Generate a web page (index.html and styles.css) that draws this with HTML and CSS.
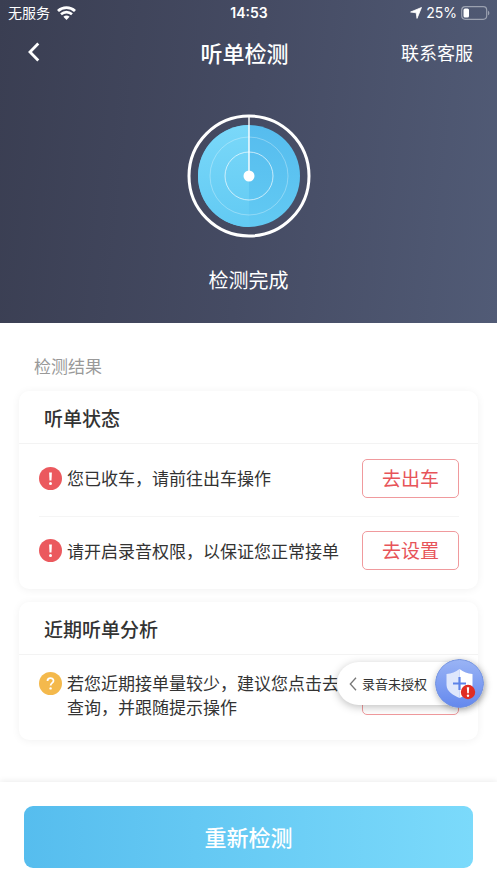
FILE: index.html
```html
<!DOCTYPE html>
<html lang="zh-CN">
<head>
<meta charset="utf-8">
<meta name="viewport" content="width=device-width, initial-scale=1">
<title>听单检测</title>
<link rel="stylesheet" href="styles.css">
</head>
<body>
<header class="hero">
  <div class="status">
    <div class="status-side">
      <span>无服务</span>
      <svg width="19" height="14" viewBox="0 0 19 14" fill="none" stroke="#fff" aria-hidden="true">
        <path d="M1 4.900C5.800.4 13.200.4 18 4.900" stroke-width="2.800"/>
        <path d="M4 8.300C7.200 5.400 11.800 5.400 15 8.300" stroke-width="2.600"/>
        <path d="M6.400 10.800C8.200 9.100 10.800 9.100 12.600 10.800L9.500 14Z" fill="#fff" stroke="none"/>
      </svg>
    </div>
    <time class="clock">14:53</time>
    <div class="status-side status-right">
      <svg width="12" height="12" viewBox="0 0 12 12" fill="#fff" stroke="#fff" stroke-width=".8" stroke-linejoin="round" aria-hidden="true"><path d="M11.500.5 7 11.400 6.200 5.800.6 5Z"/></svg>
      <span>25%</span>
      <svg width="29" height="14" viewBox="0 0 29 14" fill="none" aria-hidden="true">
        <rect x=".7" y=".7" width="25" height="12.600" rx="3.500" stroke="#9ba1b0" stroke-width="1.200"/>
        <rect x="2.500" y="2.500" width="5.500" height="9" rx="1.500" fill="#fff"/>
        <path d="M27 4.700c1.800.7 1.800 3.900 0 4.600Z" fill="#9ba1b0"/>
      </svg>
    </div>
  </div>
  <nav class="nav">
    <button class="back" type="button" aria-label="返回">
      <svg width="12" height="20" viewBox="0 0 12 20" fill="none" stroke="#fff" stroke-width="2.800" aria-hidden="true"><path d="M10.300 1.500 2 10l8.300 8.500"/></svg>
    </button>
    <h1 class="title">听单检测</h1>
    <a class="service" href="#service">联系客服</a>
  </nav>
  <div class="result">
    <svg width="124" height="124" viewBox="0 0 124 124" fill="none" aria-hidden="true">
      <defs>
        <linearGradient id="right" x1="0" y1="0" x2="0" y2="1"><stop stop-color="#56bcee"/><stop offset="1" stop-color="#62caf3"/></linearGradient>
        <linearGradient id="left" x1="0" y1="0" x2="0" y2="1"><stop stop-color="#7ad8f9"/><stop offset="1" stop-color="#62caf3"/></linearGradient>
      </defs>
      <circle cx="62" cy="62" r="60" stroke="#fff" stroke-width="3"/>
      <circle cx="62" cy="62" r="51" fill="url(#right)"/>
      <path d="M62 11a51 51 0 0 0 0 102Z" fill="url(#left)"/>
      <circle cx="62" cy="62" r="39" stroke="#fff" stroke-opacity=".3"/>
      <circle cx="62" cy="62" r="24" stroke="#fff" stroke-opacity=".65"/>
      <path d="M62 2v60" stroke="#fff" stroke-width="1.400"/>
      <circle cx="62" cy="62" r="5.500" fill="#fff"/>
    </svg>
    <p class="result-text">检测完成</p>
  </div>
</header>

<main class="content">
  <h2 class="caption">检测结果</h2>
  <section class="card">
    <h3 class="card-title">听单状态</h3>
    <ul class="rows">
      <li class="row">
        <svg class="mark" width="23" height="23" viewBox="0 0 23 23" aria-hidden="true"><circle cx="11.500" cy="11.500" r="11.500" fill="#eb595e"/><path d="M10.100 5.500h2.800l-.4 8h-2Z" fill="#fff"/><circle cx="11.500" cy="16.500" r="1.500" fill="#fff"/></svg>
        <p class="message">您已收车，请前往出车操作</p>
        <button class="action" type="button">去出车</button>
      </li>
      <li class="row">
        <svg class="mark" width="23" height="23" viewBox="0 0 23 23" aria-hidden="true"><circle cx="11.500" cy="11.500" r="11.500" fill="#eb595e"/><path d="M10.100 5.500h2.800l-.4 8h-2Z" fill="#fff"/><circle cx="11.500" cy="16.500" r="1.500" fill="#fff"/></svg>
        <p class="message">请开启录音权限，以保证您正常接单</p>
        <button class="action" type="button">去设置</button>
      </li>
    </ul>
  </section>
  <section class="card">
    <h3 class="card-title">近期听单分析</h3>
    <div class="row row-long">
      <svg class="mark" width="23" height="23" viewBox="0 0 23 23" fill="none" aria-hidden="true"><circle cx="11.500" cy="11.500" r="11.500" fill="#f4b94c"/><path d="M8.500 9c0-3.700 6-3.600 6-.3 0 2.200-2.900 2.200-2.900 4.900" stroke="#fff" stroke-width="1.800"/><circle cx="11.600" cy="16.400" r="1.200" fill="#fff"/></svg>
      <p class="message">若您近期接单量较少，建议您点击去查询，并跟随提示操作</p>
      <button class="action" type="button" aria-label="查询"></button>
    </div>
    <button class="floating" type="button">
      <svg width="8" height="14" viewBox="0 0 8 14" fill="none" stroke="#777" stroke-width="1.300" aria-hidden="true"><path d="M7 .7 1.300 7 7 13.300"/></svg>
      <span class="floating-text">录音未授权</span>
      <svg class="shield" width="49" height="49" viewBox="0 0 49 49" fill="none" aria-hidden="true">
        <defs><linearGradient id="orb" x1="0" y1="0" x2="0" y2="1"><stop stop-color="#9ab4f5"/><stop offset="1" stop-color="#6488ee"/></linearGradient></defs>
        <circle cx="24.500" cy="24.500" r="24" fill="url(#orb)" stroke="#6e8edb"/>
        <path d="M24.500 10c4 3 8 4.500 13 5v11c0 6.500-7 10.500-13 13Z" fill="#fff"/>
        <path d="M24.500 10c-4 3-8 4.500-13 5v11c0 6.500 7 10.500 13 13Z" fill="#dfe7fc"/>
        <path d="M24.500 18v13M18 24.500h13" stroke="#5c82e8" stroke-width="2.200"/>
        <circle cx="33" cy="33" r="7.200" fill="#e02e24"/>
        <path d="M31.800 28.300h2.400l-.4 5.900h-1.600Z" fill="#fff"/><circle cx="33" cy="36.700" r="1.200" fill="#fff"/>
      </svg>
    </button>
  </section>
</main>

<footer class="footer">
  <button class="retry" type="button">重新检测</button>
</footer>
</body>
</html>
```

FILE: styles.css
```css
* {
  box-sizing: border-box;
}

body,
h1,
h2,
h3,
p,
ul {
  margin: 0;
  padding: 0;
}

body {
  display: flex;
  flex-direction: column;
  min-height: 100vh;
  background: #fff;
  color: #333;
  font-family: "Noto Sans CJK SC", sans-serif;
}

button {
  padding: 0;
  border: 0;
  background: none;
  font-family: inherit;
  cursor: pointer;
}

svg {
  display: block;
  flex: none;
}

.hero {
  padding-bottom: 28px;
  background: linear-gradient(96deg, #3a3e52, #454b63 50%, #515b76);
  color: #fff;
}

.status {
  display: grid;
  grid-template-columns: minmax(0, 1fr) auto minmax(0, 1fr);
  align-items: center;
  height: 26px;
  padding: 0 7px 0 8px;
  font-family: Inter, "Noto Sans CJK SC", sans-serif;
  font-size: 14px;
  line-height: 20px;
}

.status-side {
  display: flex;
  align-items: center;
  gap: 7px;
}

.status-right {
  justify-content: flex-end;
  gap: 4px;
}

.clock {
  font-weight: 600;
}

.nav {
  display: grid;
  grid-template-columns: minmax(0, 1fr) auto minmax(0, 1fr);
  align-items: center;
  height: 54px;
  padding: 0 24px 2px 16px;
}

.back {
  justify-self: start;
  padding: 0 12px;
}

.title {
  font-size: 22px;
  font-weight: 500;
  line-height: 32px;
}

.service {
  justify-self: end;
  color: #fff;
  font-size: 18px;
  text-decoration: none;
}

.result {
  display: flex;
  flex-direction: column;
  align-items: center;
  gap: 27px;
  padding-top: 34px;
}

.result-text {
  font-size: 20px;
  line-height: 30px;
}

.content {
  padding: 31px 19px 41px;
}

.caption {
  padding-left: 15px;
  color: #999;
  font-size: 17px;
  font-weight: 400;
  line-height: 24px;
}

.card {
  position: relative;
  margin-top: 13px;
  border-radius: 10px;
  background: #fff;
  box-shadow: 0 1px 8px rgba(0, 0, 0, 0.06);
}

.card-title {
  padding: 2px 25px 0;
  border-bottom: 1px solid #f3f3f3;
  font-size: 19px;
  font-weight: 500;
  line-height: 50px;
}

.rows {
  padding-bottom: 1px;
  list-style: none;
}

.row {
  display: flex;
  align-items: center;
  gap: 5px;
  height: 72px;
  margin: 0 19px 0 20px;
  padding-bottom: 4px;
}

.row + .row {
  border-top: 1px solid #f5f5f5;
}

.row-long {
  height: 85px;
  padding-bottom: 5px;
}

.row-long .mark {
  align-self: flex-start;
  margin-top: 17px;
}

.message {
  flex: 1;
  font-size: 17px;
  line-height: 24px;
}

.action {
  width: 97px;
  height: 39px;
  margin-left: 10px;
  padding-bottom: 2px;
  border: 1px solid #f09a9d;
  border-radius: 5px;
  color: #e75459;
  font-size: 19px;
}

.floating {
  position: absolute;
  right: -6px;
  bottom: 35px;
  display: flex;
  align-items: center;
  gap: 5px;
  width: 147px;
  height: 43px;
  padding-left: 12px;
  border-radius: 22px;
  background: #fff;
  box-shadow: 0 2px 8px rgba(0, 0, 0, 0.25);
  color: #333;
}

.floating-text {
  flex: 1;
  font-size: 13px;
  text-align: left;
  white-space: nowrap;
}

.shield {
  border-radius: 50%;
  box-shadow: 0 2px 6px rgba(0, 0, 0, 0.25);
}

.footer {
  margin-top: auto;
  padding: 24px 24px 15px;
  background: #fff;
  box-shadow: 0 -1px 6px rgba(0, 0, 0, 0.08);
}

.retry {
  display: block;
  width: 100%;
  height: 62px;
  padding-bottom: 2px;
  border-radius: 9px;
  background: linear-gradient(90deg, #56bdee, #7bdafb);
  color: #fff;
  font-size: 22px;
  font-weight: 500;
}
```
